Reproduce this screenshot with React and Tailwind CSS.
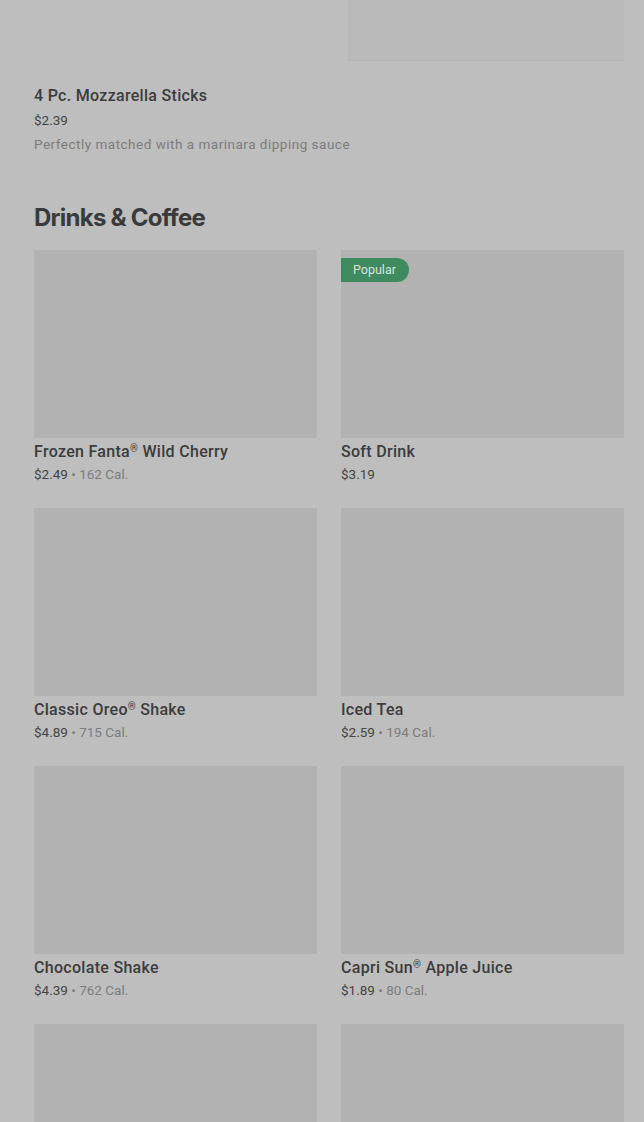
import React from "react";

const items = [
  { name: ["Frozen Fanta", "® Wild Cherry"], price: "$2.49", cal: "162 Cal." },
  { name: ["Soft Drink"], price: "$3.19", popular: true },
  { name: ["Classic Oreo", "® Shake"], price: "$4.89", cal: "715 Cal." },
  { name: ["Iced Tea"], price: "$2.59", cal: "194 Cal." },
  { name: ["Chocolate Shake"], price: "$4.39", cal: "762 Cal." },
  { name: ["Capri Sun", "® Apple Juice"], price: "$1.89", cal: "80 Cal." },
  { name: null, price: "" },
  { name: null, price: "" },
];

function Name({ parts }) {
  if (parts.length === 1) return parts[0];
  return (
    <>
      {parts[0]}
      <span className="relative top-[-5px] text-[10px]">®</span>
      {parts[1].slice(1)}
    </>
  );
}

function Card({ item }) {
  return (
    <div className="flex flex-col">
      <div className="relative h-[188px] bg-[#b2b2b2]">
        {item.popular && (
          <div className="absolute left-0 top-[8px] h-[24px] pl-[12px] pr-[13px] flex items-center rounded-r-full bg-[#3f8a5e] text-[12.5px] text-[#d6e6dc]">
            Popular
          </div>
        )}
      </div>
      {item.name && (
        <>
          <div className="mt-[4px] h-[20px] leading-[20px] text-[16px] font-medium tracking-[0.3px] text-[#3c3c3c]">
            <Name parts={item.name} />
          </div>
          <div className="mt-[2px] h-[20px] leading-[20px] text-[13.5px] text-[#444]">
            {item.price}
            {item.cal && (
              <span className="text-[#7c7c7c]"> • {item.cal}</span>
            )}
          </div>
        </>
      )}
    </div>
  );
}

export default function App() {
  return (
    <div
      className="w-[644px] h-[1122px] overflow-hidden bg-[#bebebe]"
      style={{ fontFamily: "Roboto, 'Liberation Sans', sans-serif" }}
    >
      <div className="pl-[34px] pr-[20px]">
        <div className="ml-auto w-[276px] h-[61px] bg-[#bababa] border-l border-b border-[#b6b6b6]" />
        <div className="mt-[23px] h-[24px] leading-[24px] text-[16px] font-medium tracking-[0.3px] text-[#3c3c3c]">4 Pc. Mozzarella Sticks</div>
        <div className="mt-[2px] h-[20px] leading-[20px] text-[13.5px] text-[#444]">$2.39</div>
        <div className="mt-[4px] h-[20px] leading-[20px] text-[13.5px] tracking-[0.5px] text-[#7c7c7c]">Perfectly matched with a marinara dipping sauce</div>
        <h2
          className="mt-[48px] h-[32px] leading-[32px] text-[24px] font-bold tracking-[-0.75px] text-[#3a3a3a]"
          style={{ fontFamily: "Inter, 'Liberation Sans', sans-serif" }}
        >
          Drinks &amp; Coffee
        </h2>
        <div className="mt-[16px] grid grid-cols-2 gap-x-[24px] gap-y-[24px]">
          {items.map((it, i) => (
            <Card key={i} item={it} />
          ))}
        </div>
      </div>
    </div>
  );
}
